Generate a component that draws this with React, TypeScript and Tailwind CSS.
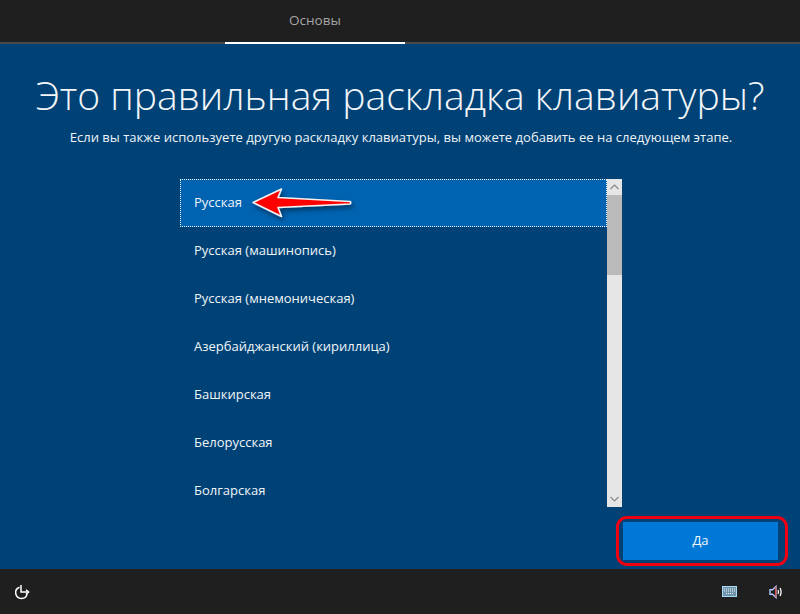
import React from "react";

const items = [
  "Русская",
  "Русская (машинопись)",
  "Русская (мнемоническая)",
  "Азербайджанский (кириллица)",
  "Башкирская",
  "Белорусская",
  "Болгарская",
];

function Arrow() {
  return (
    <svg className="absolute left-[67px] top-[7px]" width="108" height="36" viewBox="0 0 108 36" fill="none">
      <defs>
        <filter id="s" x="-20%" y="-40%" width="140%" height="200%">
          <feDropShadow dx="2" dy="3" stdDeviation="2.5" floodColor="#000" floodOpacity="0.45" />
        </filter>
      </defs>
      <path
        d="M5 15.5 L33.5 2 L30 10.5 L102 14.5 Q103.5 15.5 102 17 L30 20.5 L33.5 29.5 Z"
        fill="#ff0000"
        stroke="#f2f2f2"
        strokeWidth="1.6"
        strokeLinejoin="round"
        filter="url(#s)"
      />
    </svg>
  );
}

export default function App() {
  return (
    <div className="w-[800px] h-[614px] flex flex-col bg-[#004275] text-white overflow-hidden font-['Open_Sans','Liberation_Sans',sans-serif]">
      <header className="h-[44px] shrink-0 bg-[#1f1f1f] border-b-2 border-[#4a4a4a] flex justify-center">
        <div className="relative w-[180px] ml-[-170px] h-[44px] flex items-center justify-center text-[13.5px] text-[#a6a6a6] pb-[2px] border-b-2 border-white">
          Основы
        </div>
      </header>

      <main className="relative flex-1 flex flex-col items-center">
        <h1 className="mt-[21px] h-[60px] leading-[60px] text-[39.1px] font-light text-[#f3f6f9] whitespace-nowrap">
          Это правильная раскладка клавиатуры?
        </h1>
        <p className="mt-[1px] ml-[2px] h-[22px] leading-[22px] text-[13px] tracking-[0.02px] text-[#eef3f7] whitespace-nowrap">
          Если вы также используете другую раскладку клавиатуры, вы можете добавить ее на следующем этапе.
        </p>

        <div className="mt-[31px] w-[442px] ml-[2px] h-[328px] flex">
          <ul className="w-[427px] h-[328px] overflow-hidden">
            {items.map((item, i) => (
              <li
                key={item}
                className={
                  i === 0
                    ? "relative h-[48px] pl-[13px] flex items-center text-[13px] text-[#f0f5f9] bg-[#0063b1] border border-dotted border-[#eef3f7]"
                    : "h-[48px] pl-[14px] flex items-center text-[13px] text-[#f0f5f9]"
                }
              >
                {item}
                {i === 0 && <Arrow />}
              </li>
            ))}
          </ul>
          <div className="w-[15px] h-[328px] bg-[#e6e6e6] flex flex-col">
            <div className="h-[16px] flex items-center justify-center">
              <svg width="9" height="6" viewBox="0 0 9 6" fill="none" stroke="#8a8a8a" strokeWidth="1.2">
                <path d="M0.5 5 L4.5 1 L8.5 5" />
              </svg>
            </div>
            <div className="h-[80px] bg-[#bababa]" />
            <div className="flex-1" />
            <div className="h-[16px] flex items-center justify-center">
              <svg width="9" height="6" viewBox="0 0 9 6" fill="none" stroke="#8a8a8a" strokeWidth="1.2">
                <path d="M0.5 1 L4.5 5 L8.5 1" />
              </svg>
            </div>
          </div>
        </div>

        <div className="w-full flex justify-end pr-[22px] mt-[15px]">
          <div className="relative w-[155px] h-[38px]">
            <button className="w-full h-full bg-[#0078d7] text-[13px] text-[#f0f5f9]">Да</button>
            <div className="absolute left-[-7px] top-[-6px] w-[172px] h-[50px] rounded-[11px] border-[3px] border-[#ee0011]" />
          </div>
        </div>
      </main>

      <footer className="h-[45px] shrink-0 bg-[#1f1f1f] flex items-center pl-[14px] pr-[17px]">
        <svg width="16" height="16" viewBox="0 0 16 16" fill="none" stroke="#ffffff" strokeWidth="1.5">
          <path d="M5.5 3.2 A5.8 5.8 0 1 0 13.2 9.5" />
          <path d="M7 1 V8 H13.5" />
          <path d="M12 5.8 L14.6 8 L12 10.2" />
        </svg>
        <div className="flex-1" />
        <svg width="15" height="11" viewBox="0 0 15 11" className="mr-[32px]">
          <rect x="0.5" y="0.5" width="14" height="10" fill="#6f93a8" stroke="#a8dcf4" />
          <path d="M2 3 H13 M2 5 H13 M4 7.5 H11" stroke="#e8f2f6" strokeWidth="1" strokeDasharray="1 1" />
        </svg>
        <svg width="14" height="14" viewBox="0 0 14 14" fill="none">
          <path d="M1 4.8 H3.5 L7 1.5 V12.5 L3.5 9.2 H1 Z" stroke="#b0ccff" strokeWidth="1.4" />
          <path d="M6.8 2 V12" stroke="#e0453a" strokeWidth="1.2" />
          <path d="M9 5 Q10.2 7 9 9" stroke="#ffffff" strokeWidth="1.3" />
          <path d="M11 3 Q13.2 7 11 11" stroke="#ffffff" strokeWidth="1.3" />
        </svg>
      </footer>
    </div>
  );
}
